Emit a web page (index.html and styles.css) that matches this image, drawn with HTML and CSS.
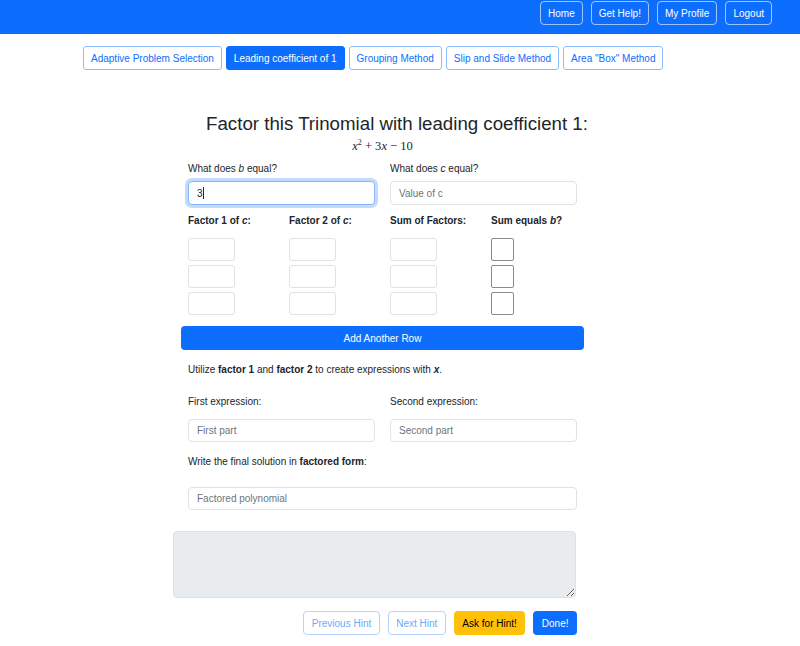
FILE: index.html
```html
<!DOCTYPE html>
<html lang="en">
<head>
<meta charset="utf-8">
<title>Factor Trinomial</title>
<link rel="stylesheet" href="styles.css">
</head>
<body>
<nav class="topbar">
  <button class="nav-btn">Home</button>
  <button class="nav-btn">Get Help!</button>
  <button class="nav-btn">My Profile</button>
  <button class="nav-btn">Logout</button>
</nav>
<div class="tabs">
  <button class="tab">Adaptive Problem Selection</button>
  <button class="tab active">Leading coefficient of 1</button>
  <button class="tab">Grouping Method</button>
  <button class="tab">Slip and Slide Method</button>
  <button class="tab">Area "Box" Method</button>
</div>
<h1 class="title">Factor this Trinomial with leading coefficient 1:</h1>
<main class="form">
  <div class="math"><i>x</i><sup>2</sup> + 3<i>x</i> − 10</div>
  <div class="two-col">
    <div class="field">
      <label class="lbl">What does <i>b</i> equal?</label>
      <div class="input focused">3<span class="caret"></span></div>
    </div>
    <div class="field">
      <label class="lbl">What does <i>c</i> equal?</label>
      <input class="input" placeholder="Value of c">
    </div>
  </div>
  <div class="four-col heads">
    <b>Factor 1 of <i>c</i>:</b>
    <b>Factor 2 of <i>c</i>:</b>
    <b>Sum of Factors:</b>
    <b>Sum equals <i>b</i>?</b>
  </div>
  <div class="rows">
    <div class="four-col row"><input class="small"><input class="small"><input class="small"><span class="check"></span></div>
    <div class="four-col row"><input class="small"><input class="small"><input class="small"><span class="check"></span></div>
    <div class="four-col row"><input class="small"><input class="small"><input class="small"><span class="check"></span></div>
  </div>
  <button class="add-row">Add Another Row</button>
  <p class="note">Utilize <b>factor 1</b> and <b>factor 2</b> to create expressions with <b><i>x</i></b>.</p>
  <div class="two-col exprs">
    <div class="field">
      <label class="lbl">First expression:</label>
      <input class="input expr-input" placeholder="First part">
    </div>
    <div class="field">
      <label class="lbl">Second expression:</label>
      <input class="input expr-input" placeholder="Second part">
    </div>
  </div>
  <p class="note final">Write the final solution in <b>factored form</b>:</p>
  <input class="input wide" placeholder="Factored polynomial">
  <textarea class="hint-box" disabled></textarea>
  <div class="actions">
    <button class="btn outline">Previous Hint</button>
    <button class="btn outline">Next Hint</button>
    <button class="btn warn">Ask for Hint!</button>
    <button class="btn primary">Done!</button>
  </div>
</main>
</body>
</html>
```
FILE: styles.css
```css
* { box-sizing: border-box; }
body {
  margin: 0;
  background: #fff;
  font-family: "Liberation Sans", Arial, sans-serif;
  font-size: 10px;
  color: #212529;
}
button, input, textarea { font-family: inherit; font-size: 10px; }
.topbar {
  height: 34px;
  background: #0d6efd;
  display: flex;
  justify-content: flex-end;
  align-items: flex-start;
  gap: 8px;
  padding: 1px 28px 0 0;
}
.nav-btn {
  height: 24px;
  padding: 0 7px;
  background: transparent;
  color: #fff;
  border: 1px solid rgba(255,255,255,0.6);
  border-radius: 4px;
}
.tabs {
  display: flex;
  gap: 4px;
  padding-left: 83px;
  margin-top: 12px;
}
.tab {
  height: 24px;
  padding: 0 7px;
  background: #fff;
  color: #0d6efd;
  border: 1px solid #8fbcfd;
  border-radius: 3px;
}
.tab.active { background: #0d6efd; color: #fff; border-color: #0d6efd; }
.title {
  width: 794px;
  margin: 42px 0 0;
  text-align: center;
  font-size: 18.7px;
  line-height: 24px;
  font-weight: 500;
}
.form { width: 389px; margin-left: 188px; }
.math {
  text-align: center;
  font-family: "Liberation Serif", "DejaVu Serif", serif;
  font-size: 12.5px;
  line-height: 18px;
  margin-top: 1px;
}
.math sup { font-size: 8px; line-height: 0; vertical-align: 5px; }
.two-col { display: grid; grid-template-columns: 187px 187px; column-gap: 15px; margin-top: 6px; }
.field { display: flex; flex-direction: column; }
.lbl { line-height: 16px; height: 16px; }
.input {
  margin-top: 4px;
  height: 24px;
  width: 100%;
  border: 1px solid #dee2e6;
  border-radius: 4px;
  padding: 0 8px;
  background: #fff;
  color: #212529;
  display: flex;
  align-items: center;
}
.input::placeholder { color: #6c757d; }
.focused { border-color: #86b7fe; box-shadow: 0 0 0 3px rgba(13,110,253,0.25); }
.caret { display: inline-block; width: 1px; height: 12px; background: #212529; }
.four-col { display: grid; grid-template-columns: repeat(4, 86px); column-gap: 15px; }
.heads { margin-top: 8px; line-height: 16px; }
.rows { margin-top: 9px; display: flex; flex-direction: column; gap: 4px; }
.row { align-items: start; }
.small {
  width: 47px;
  height: 23px;
  border: 1px solid #dee2e6;
  border-radius: 3px;
}
.check {
  width: 23px;
  height: 23px;
  border: 1px solid #8a8a8a;
  border-radius: 2px;
  background: #fff;
}
.add-row {
  display: block;
  margin: 11px -7px 0;
  width: 403px;
  height: 24px;
  background: #0d6efd;
  color: #fff;
  border: 0;
  border-radius: 4px;
}
.note { margin: 12px 0 0; line-height: 16px; }
.exprs { margin-top: 16px; }
.expr-input { margin-top: 9px; height: 23px; }
.final { margin-top: 12px; }
.wide { margin-top: 17px; height: 23px; }
.hint-box {
  display: block;
  margin: 21px 0 0 -15px;
  width: 403px;
  height: 67px;
  background: #e9ecef;
  border: 1px solid #dee2e6;
  border-radius: 4px;
  resize: vertical;
}
.actions {
  display: flex;
  justify-content: flex-end;
  gap: 8px;
  margin-top: 13px;
}
.btn {
  height: 24px;
  padding: 0 7.5px;
  border-radius: 4px;
  border: 1px solid transparent;
}
.outline { background: #fff; color: #6ea8fe; border-color: #b6d4fe; }
.warn { background: #ffc107; color: #000; }
.primary { background: #0d6efd; color: #fff; }
```
